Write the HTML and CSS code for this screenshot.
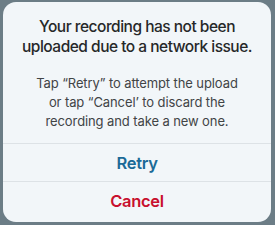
FILE: index.html
```html
<!DOCTYPE html>
<html>
<head>
<meta charset="utf-8">
<link rel="stylesheet" href="styles.css">
</head>
<body>
<div class="screen">
  <div class="dialog">
    <div class="content">
      <h1 class="title">Your recording has not been uploaded due to a network issue.</h1>
      <p class="message">Tap “Retry” to attempt the upload or tap “Cancel’ to discard the recording and take a new one.</p>
    </div>
    <button class="action retry">Retry</button>
    <button class="action cancel">Cancel</button>
  </div>
</div>
</body>
</html>
```
FILE: styles.css
```css
html, body {
  margin: 0;
  padding: 0;
}
body {
  width: 275px;
  height: 225px;
  background: #6c7d86;
  font-family: Inter, "Noto Sans", sans-serif;
  overflow: hidden;
}
.screen {
  padding: 2px 4px 3px 3px;
}
.dialog {
  width: 268px;
  height: 220px;
  background: #f2f6f9;
  border-radius: 13px;
  display: flex;
  flex-direction: column;
  overflow: hidden;
}
.content {
  height: 141px;
  box-sizing: border-box;
  padding: 15px 8px 0;
  text-align: center;
}
.title {
  margin: 0;
  font-size: 15.5px;
  line-height: 20px;
  font-weight: 500;
  letter-spacing: -0.5px;
  color: #262829;
}
.message {
  margin: 17px 0 0;
  font-size: 13px;
  line-height: 19px;
  letter-spacing: -0.1px;
  color: #414446;
  padding: 0 20px;
}
.action {
  border: 0;
  border-top: 1px solid #dde2e6;
  background: transparent;
  height: 38px;
  font-family: inherit;
  font-size: 16.5px;
  font-weight: 600;
  letter-spacing: -0.3px;
  padding: 0;
  text-align: center;
}
.retry {
  color: #1b6a97;
}
.cancel {
  color: #c8102e;
}
```
